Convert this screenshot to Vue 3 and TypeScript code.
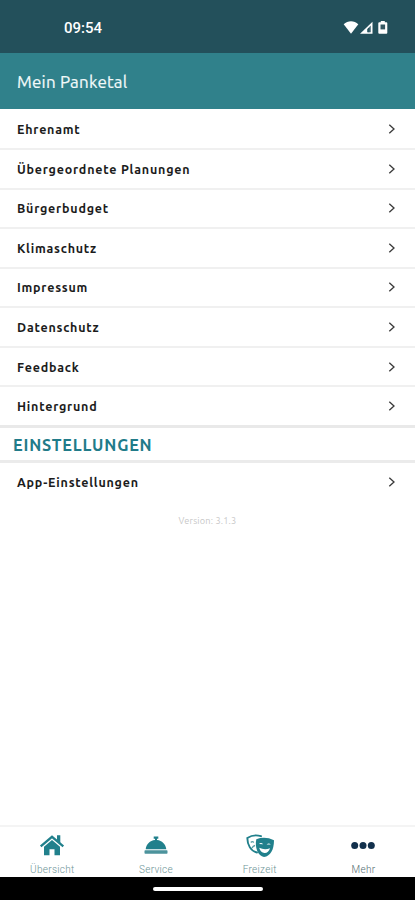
<script setup lang="ts">
const entries: string[] = [
  'Ehrenamt',
  'Übergeordnete Planungen',
  'Bürgerbudget',
  'Klimaschutz',
  'Impressum',
  'Datenschutz',
  'Feedback',
  'Hintergrund',
]
</script>

<template>
  <div class="screen">
    <div class="status">
      <span class="clock">09:54</span>
      <svg class="signals" width="48" height="16" viewBox="0 0 48 16">
        <path d="M.7 4.2C4.8.3 11.2.3 15.3 4.2L8 13.700z" fill="#fff" />
        <path d="M17 13.700 29.500 1.700v12z" fill="#fff" />
        <path d="M24 9.300 27.800 5.600v6.600H24z" fill="#4f7580" />
        <path d="M25.800 8v4.200" stroke="#23505b" stroke-width="1.300" />
        <path d="M37.800 2.200V.9h4v1.300h1.500q1 0 1 1v9.600q0 1-1 1h-7q-1 0-1-1V3.200q0-1 1-1z" fill="#fff" />
        <path d="M37.500 4.500h4.600v4.900h-4.600z" fill="#355862" />
      </svg>
    </div>
    <header class="title">Mein Panketal</header>
    <ul class="menu">
      <li v-for="entry in entries" :key="entry" class="row">
        <span class="label">{{ entry }}</span>
        <svg class="chevron" width="8" height="12" viewBox="0 0 8 12"><path d="M1.300 1.700 6 6l-4.700 4.300" /></svg>
      </li>
    </ul>
    <h2 class="section">EINSTELLUNGEN</h2>
    <div class="row settings">
      <span class="label">App-Einstellungen</span>
      <svg class="chevron" width="8" height="12" viewBox="0 0 8 12"><path d="M1.300 1.700 6 6l-4.700 4.300" /></svg>
    </div>
    <p class="version">Version: 3.1.3</p>
    <nav class="tabs">
      <div class="tab">
        <svg width="26" height="24" viewBox="0 0 26 24">
          <path d="M1.700 12.300 13 2.800l11.300 9.500" fill="none" stroke="#21808c" stroke-width="2.300" />
          <path d="M18 1.200h3.300v8L18 6.500zM5 12.800l8-6.700 8 6.700v8.500h-5.500v-6h-5v6H5z" fill="#21808c" />
        </svg>
        <span>Übersicht</span>
      </div>
      <div class="tab">
        <svg width="26" height="24" viewBox="0 0 26 24">
          <path d="M10.700 2.500h4.600v2.200H14v1.200c5 .5 8.800 4.300 9.300 9.400H2.700C3.200 10.200 7 6.400 12 5.900V4.700h-1.300z" fill="#21808c" />
          <rect x="1.500" y="16.300" width="23" height="3.400" rx=".7" fill="#4c939c" />
        </svg>
        <span>Service</span>
      </div>
      <div class="tab">
        <svg width="30" height="24" viewBox="0 1 30 24">
          <path d="M12 19.500C5.500 18 2.400 11.500 2.300 5 6.500 2.300 11.500 1.800 16 3.200" fill="none" stroke="#21808c" stroke-width="1.900" stroke-linecap="round" />
          <path d="M5.800 9.500q1.500-1.700 3 0M7 15q1-2 3-2.500" fill="none" stroke="#5a9ea7" stroke-width="1.300" />
          <path d="M11.300 6.200Q20 2.800 29 7.200C29 16.500 25.500 23 19 24 13 23 9.500 14.500 11.300 6.200z" fill="#21808c" />
          <path d="M14 11q2-2.200 4.200.3zM21.600 11.600q2.300-2.200 4.200 0z" fill="#fff" />
          <path d="M14.200 14.800q5.200 2.500 10.800.5-1.600 5-5.500 4.800-4-.4-5.300-5.300z" fill="#fff" />
        </svg>
        <span>Freizeit</span>
      </div>
      <div class="tab active">
        <svg width="26" height="24" viewBox="0 0 26 24" fill="#12304c">
          <circle cx="4.700" cy="11.500" r="3.500" /><circle cx="13" cy="11.500" r="3.500" /><circle cx="21.300" cy="11.500" r="3.500" />
        </svg>
        <span>Mehr</span>
      </div>
    </nav>
    <div class="gesture"><div class="pill"></div></div>
  </div>
</template>

<style>
body {
  margin: 0;
  background: #fff;
}
</style>

<style scoped>
.screen {
  width: 415px;
  height: 900px;
  display: flex;
  flex-direction: column;
  overflow: hidden;
  background: #fff;
  font-family: Ubuntu, "Noto Sans", sans-serif;
}
.status {
  height: 53px;
  flex: none;
  box-sizing: border-box;
  padding: 2px 24px 0 64px;
  display: flex;
  align-items: center;
  justify-content: space-between;
  background: #23505b;
  color: #fff;
}
.clock {
  font: 500 15px Roboto, sans-serif;
}
.title {
  height: 56px;
  flex: none;
  box-sizing: border-box;
  padding: 1px 17px 0;
  display: flex;
  align-items: center;
  background: #30818b;
  color: #f2fafa;
  font-size: 17px;
  letter-spacing: 0.200px;
  -webkit-text-stroke: 0.200px #f2fafa;
}
.menu {
  list-style: none;
  margin: 0;
  padding: 0;
}
.row {
  height: 39.570px;
  box-sizing: border-box;
  display: flex;
  align-items: center;
  justify-content: space-between;
  padding: 0 19px 0 17px;
}
.menu .row {
  border-bottom: 2px solid #f0f0f0;
}
.menu .row:first-child {
  height: 41px;
  padding-top: 1px;
}
.menu .row:last-child {
  height: 38px;
  border-bottom: 0;
}
.label {
  font-size: 12.500px;
  font-weight: 700;
  letter-spacing: 0.780px;
  color: #1c1c1c;
}
.chevron path {
  fill: none;
  stroke: #3a3a3a;
  stroke-width: 1.300;
}
.section {
  height: 38px;
  flex: none;
  box-sizing: border-box;
  margin: 0;
  padding: 1px 13px 0;
  display: flex;
  align-items: center;
  border-top: 3px solid #e9e9e9;
  border-bottom: 3px solid #ebebeb;
  color: #217b89;
  font-size: 16.200px;
  font-weight: 600;
  letter-spacing: 0.820px;
}
.settings {
  flex: none;
  height: 37px;
}
.version {
  margin: 14px 0 0;
  text-align: center;
  font-size: 9.200px;
  letter-spacing: 0.180px;
  line-height: 14px;
  color: #c8c8c8;
}
.tabs {
  height: 52px;
  flex: none;
  box-sizing: border-box;
  margin-top: auto;
  border-top: 2px solid #f4f4f4;
  display: grid;
  grid-template-columns: repeat(4, 103.700px);
}
.tab {
  display: flex;
  flex-direction: column;
  align-items: center;
  padding: 7px 0 0 1px;
  color: #6c9496;
  font: 300 10px/12px Roboto, sans-serif;
  letter-spacing: 0.300px;
}
.tab svg {
  height: 24px;
  margin-bottom: 6px;
  flex: none;
}
.tab.active {
  color: #536c71;
}
.gesture {
  height: 23px;
  flex: none;
  display: flex;
  justify-content: center;
  align-items: center;
  background: #000;
}
.pill {
  width: 110px;
  height: 4px;
  border-radius: 2px;
  background: #fff;
}
</style>
